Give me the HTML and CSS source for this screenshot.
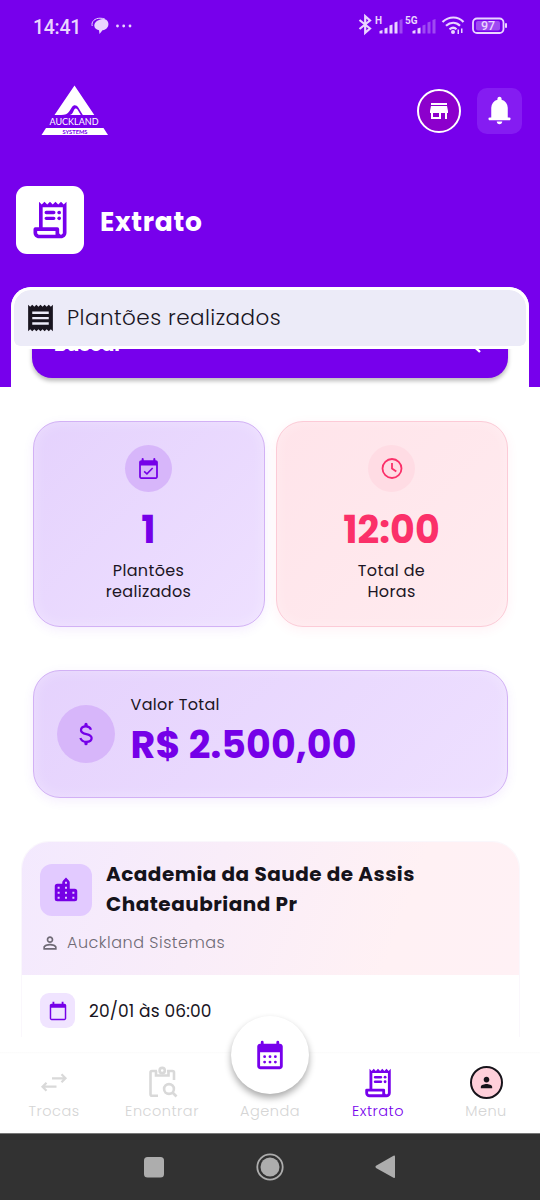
FILE: index.html
```html
<!DOCTYPE html>
<html lang="pt-BR">
<head>
<meta charset="utf-8">
<title>Extrato</title>
<link rel="stylesheet" href="styles.css">
</head>
<body>
<svg class="defs" width="0" height="0" aria-hidden="true">
  <symbol id="receipt-long" viewBox="0 0 24 24"><path d="M19.500 3.500L18 2l-1.500 1.500L15 2l-1.500 1.500L12 2l-1.500 1.500L9 2 7.500 3.500 6 2v14H4q-1 0-1 1v2c0 1.660 1.340 3 3 3h12c1.660 0 3-1.340 3-3V2l-1.500 1.500zM15 20H6c-.55 0-1-.45-1-1v-1h10v2zm4-1c0 .55-.45 1-1 1s-1-.45-1-1v-2q0-1-1-1H8V5h11v14z"/><path d="M10 7h4q1 0 1 .9t-1 .9h-4q-1 0-1-.9t1-.9zM10 10.200h4q1 0 1 .9t-1 .9h-4q-1 0-1-.9t1-.9z"/><circle cx="17" cy="7.900" r="1"/><circle cx="17" cy="11.100" r="1"/></symbol>
</svg>
<div class="screen">
  <header class="hero">
    <div class="status">
      <span class="time">14:41</span>
      <svg class="status-left" width="44" height="24" viewBox="0 0 44 24">
        <path d="M8 4c4-2 8-1 9 2 1.500 4-1 7.500-5.500 8.300L8.500 18 8 14.300C2 13 1.500 6.500 8 4z"/>
        <path class="hair" d="M1.200 10C0 5.500 4 2.200 9 2.200q3 0 5 1"/>
        <circle cx="26.500" cy="10" r="1.400"/><circle cx="32.700" cy="10" r="1.400"/><circle cx="39" cy="10" r="1.400"/>
      </svg>
      <svg class="status-right" width="152" height="24" viewBox="0 0 152 24">
        <path class="line wide" d="M1.500 8l10.500 8.500-4.800 4.300V4.200L12 8.500 1.500 17"/>
        <text class="net" x="17" y="12">H</text>
        <path d="M21.500 21.500v-2.500l3-1v3.500zM26.500 21.500v-5l3-1v6zM31.500 21.500v-8l3-1v9zM36.500 21.500v-11l3-1v12z"/>
        <path class="dim" d="M41.500 21.500V8l3-1v14.500z"/>
        <text class="net" x="47" y="12">5G</text>
        <path d="M54.500 21.500v-2.500l3-1v3.500zM59.500 21.500v-5l3-1v6z"/>
        <path class="dim" d="M64.500 21.500v-8l3-1v9zM69.500 21.500v-11l3-1v12zM74.500 21.500V8l3-1v14.500z"/>
        <path class="line wide" d="M84.500 10c6.500-6 15.500-6 21 0M88 13.800c4.500-4 10-4 14 0M91.500 17.300c2.500-2 5-2 7 0"/>
        <circle cx="95" cy="20" r="2"/><path d="M99.500 17.500h1.500v4.500h-1.500zM103 16.500h1.500V21H103z"/>
        <rect class="line" x="115" y="6.500" width="30.500" height="14.500" rx="4"/>
        <rect class="dim" x="118" y="9" width="24" height="9.500" rx="2"/>
        <rect x="147" y="11" width="2" height="5" rx="1"/>
        <text class="pct" x="123" y="18.200">97</text>
      </svg>
    </div>
    <div class="topbar">
      <svg class="logo" width="68" height="52" viewBox="0 0 68 52">
        <path d="M33.500 1.500L53.300 31H41.800l-4.500-7.500c-1.800-3-4.700-3-6.300-.6L28.500 27c-2 3-4.500 4-8.500 4h-6.500z"/>
        <path d="M34.300 24.500c.8-.3 1.700.1 2.200 1L39.800 31H29c1.500-.5 2.500-1.600 3-2.800.8-1.700 1.500-3.300 2.300-3.700z"/>
        <text class="logo-name" x="8.500" y="41" textLength="49" lengthAdjust="spacingAndGlyphs">AUCKLAND</text>
        <path d="M5 44h57.500l4.500 6.900H.5z"/>
        <text class="logo-sub" x="21.500" y="49.700" textLength="25" lengthAdjust="spacingAndGlyphs">SYSTEMS</text>
      </svg>
      <span class="store"><svg width="24" height="24" viewBox="0 0 24 24"><path d="M20 4H4v2h16V4zm1 10v-2l-1-5H4l-1 5v2h1v6h10v-6h4v6h2v-6h1zm-9 4H6v-4h6v4z"/></svg></span>
      <span class="bell"><svg width="33" height="33" viewBox="0 0 24 24"><path d="M4.500 19Q4 19 4 18v-.5q0-.5 1-.5h1v-7q0-2.075 1.250-3.687T10.500 4.200v-.7q0-.625.438-1.062T12 2t1.063.438T13.500 3.500v.7q2 .5 3.250 2.113T18 10v7h1q1 0 1 .5v.5q0 1-.5 1zM12 22q-.825 0-1.412-.587T10 20h4q0 .825-.587 1.413T12 22"/></svg></span>
    </div>
    <div class="heading">
      <span class="heading-icon"><svg width="44" height="44"><use href="#receipt-long"/></svg></span>
      <h1>Extrato</h1>
    </div>
    <section class="sheet">
      <div class="tab">
        <svg width="33" height="32" viewBox="0 0 24 24" preserveAspectRatio="none"><path d="M18 17H6v-1.800h12V17zm0-4H6v-1.800h12V13zm0-4H6V7.200h12V9zM3 22l1.500-1.500L6 22l1.500-1.500L9 22l1.500-1.500L12 22l1.500-1.500L15 22l1.500-1.500L18 22l1.500-1.500L21 22V2l-1.500 1.500L18 2l-1.500 1.500L15 2l-1.500 1.500L12 2l-1.500 1.500L9 2 7.500 3.500 6 2 4.500 3.500 3 2v20z"/></svg>
        <span>Plantões realizados</span>
      </div>
      <div class="search-window">
        <div class="search">
          <span>Buscar</span>
          <svg width="24" height="24" viewBox="0 0 24 24"><circle cx="9" cy="5" r="6"/><path d="M13 9.500l7 6.500"/></svg>
        </div>
      </div>
    </section>
  </header>
  <main class="content">
    <div class="stats">
      <article class="card stat">
        <span class="disc"><svg width="25" height="25" viewBox="0 0 24 24"><path d="M19 4h-.4V3q0-1-1-1t-1 1v1H7.400V3q0-1-1-1t-1 1v1H5c-1.100 0-2 .9-2 2v14c0 1.100.9 2 2 2h14c1.100 0 2-.9 2-2V6c0-1.100-.9-2-2-2zm.3 16.300H4.700V9h14.600v11.300z"/><path class="tick thin" d="M7.800 14.800l2.700 2.400 5.500-5.700"/></svg></span>
        <strong>1</strong>
        <p>Plantões<br>realizados</p>
      </article>
      <article class="card stat pink">
        <span class="disc"><svg width="24" height="24" viewBox="0 0 24 24"><circle class="stroke" cx="12" cy="12.500" r="9.500"/><path class="tick" d="M12 7v5.500l4.300 3"/></svg></span>
        <strong>12:00</strong>
        <p>Total de<br>Horas</p>
      </article>
    </div>
    <article class="card total">
      <span class="disc big"><svg width="30" height="30" viewBox="0 0 24 24"><path class="tick" d="M16 8.600c-.6-1.700-2-2.700-4-2.700-2.400 0-4 1.200-4 3 0 4.300 8.500 2 8.500 6.300 0 1.900-1.800 3.100-4.300 3.100-2.300 0-4-1.100-4.700-3.100"/><path d="M10.700 6V4.300Q10.700 3 12 3t1.300 1.300V6zM10.700 18v1.700q0 1.300 1.300 1.300t1.300-1.300V18z"/></svg></span>
      <div>
        <p>Valor Total</p>
        <strong>R$ 2.500,00</strong>
      </div>
    </article>
    <article class="shift">
      <div class="shift-head">
        <div class="place">
          <span class="place-icon"><svg width="30" height="30" viewBox="0 0 24 24"><path d="M15 11V6q0-1-.7-1.700L12 2 9.700 4.300Q9 5 9 6v1H5Q3 7 3 9v10q0 2 2 2h14q2 0 2-2v-6q0-2-2-2h-4zm-8.100 7.900H5.300v-1.600h1.600v1.600zm0-4H5.300v-1.600h1.600v1.600zm0-4H5.300V9.300h1.600v1.600zm5.900 8h-1.600v-1.600h1.600v1.600zm0-4h-1.600v-1.600h1.600v1.600zm0-4h-1.600V9.300h1.600v1.600zm0-4h-1.600V5.300h1.600v1.600zm5.900 12h-1.600v-1.600h1.600v1.600zm0-4h-1.600v-1.600h1.600v1.600z"/></svg></span>
          <h2>Academia da Saude de Assis<br>Chateaubriand Pr</h2>
        </div>
        <div class="person">
          <svg width="20" height="20" viewBox="0 0 24 24"><path d="M12 6a2 2 0 110 4 2 2 0 010-4m0 9c2.700 0 5.800 1.290 6 2v1H6v-.99c.2-.72 3.300-2.010 6-2.010m0-11C9.790 4 8 5.790 8 8s1.790 4 4 4 4-1.790 4-4-1.790-4-4-4zm0 9c-2.670 0-8 1.340-8 4v3h16v-3c0-2.660-5.330-4-8-4z"/></svg>
          <span>Auckland Sistemas</span>
        </div>
      </div>
      <div class="when">
        <span class="when-icon"><svg width="22" height="22" viewBox="0 0 24 24"><path d="M19 4h-1V2h-2v2H8V2H6v2H5c-1.100 0-2 .9-2 2v14c0 1.100.9 2 2 2h14c1.100 0 2-.9 2-2V6c0-1.100-.9-2-2-2zm.4 16.400H4.600V8.500h14.800v11.900z"/></svg></span>
        <span>20/01 às 06:00</span>
      </div>
    </article>
  </main>
  <nav class="tabs">
    <a><svg width="34" height="34" viewBox="0 0 34 34"><path class="ln thin" d="M15 12.300h13M24.500 8.300l4 4-4 4M19.500 20.700H6M9.500 16.700l-4 4 4 4"/></svg><span>Trocas</span></a>
    <a><svg width="34" height="34" viewBox="0 0 34 34"><path class="ln" d="M13 29.700H7Q5.500 29.700 5.500 28.200V6.500Q5.500 5 7 5H12M22 5h5.500Q29 5 29 6.500V14M11 5v4.500h12.500V5"/><circle class="ln" cx="17.200" cy="4.500" r="2.600"/><circle class="ln" cx="24" cy="23" r="4.900"/><path class="ln" d="M27.500 26.500l4 4"/></svg><span>Encontrar</span></a>
    <a><i></i><span>Agenda</span></a>
    <a class="active"><svg width="34" height="34"><use href="#receipt-long"/></svg><span>Extrato</span></a>
    <a><b class="avatar"><svg width="17" height="17" viewBox="0 0 24 24"><path d="M12 12c2.210 0 4-1.790 4-4s-1.790-4-4-4-4 1.790-4 4 1.790 4 4 4zm0 2c-2.670 0-8 1.340-8 4v2h16v-2c0-2.660-5.330-4-8-4z"/></svg></b><span>Menu</span></a>
    <button class="fab"><svg width="34" height="34" viewBox="0 0 24 24"><path d="M19 4h-.5V3q0-1-1-1t-1 1v1h-9V3q0-1-1-1t-1 1v1H5c-1.100 0-2 .9-2 2v14c0 1.100.9 2 2 2h14c1.100 0 2-.9 2-2V6c0-1.100-.9-2-2-2zm0 16H5V10h14v10z"/><circle cx="8.200" cy="13.200" r="1"/><circle cx="12" cy="13.200" r="1"/><circle cx="15.800" cy="13.200" r="1"/><circle cx="8.200" cy="17" r="1"/><circle cx="12" cy="17" r="1"/><circle cx="15.800" cy="17" r="1"/></svg></button>
  </nav>
  <footer class="system">
    <svg width="24" height="30" viewBox="0 0 24 30"><rect x="2" y="5" width="20" height="20.500" rx="3.500"/></svg>
    <svg width="30" height="30" viewBox="0 0 30 30"><circle class="ring" cx="15" cy="15" r="12.700"/><circle cx="15" cy="15" r="9.500"/></svg>
    <svg width="24" height="30" viewBox="0 0 24 30"><path d="M2 13.800L19.500 3.700q1.500-.7 1.500.8v20.500q0 1.500-1.500.8L2 16q-1.300-1.100 0-2.200z"/></svg>
  </footer>
</div>
</body>
</html>
```

FILE: styles.css
```css
* { box-sizing: border-box; }
body { margin: 0; font-family: Poppins, Inter, "Noto Sans", sans-serif; color: #19151f; }
h1, h2, p { margin: 0; }
svg { display: block; fill: currentColor; flex: none; }
.defs { position: absolute; }
.screen { width: 540px; height: 1200px; display: flex; flex-direction: column; overflow: hidden; background: #fff; }

.hero { height: 387px; flex: none; background: #7700ec; display: flex; flex-direction: column; }
.status { height: 52px; flex: none; padding: 12px 30px 0 33px; display: flex; color: #ead5ff; }
.time { font: 500 19.5px/31px Roboto, sans-serif; width: 58px; letter-spacing: -.3px; }
.status-left { margin-top: 4px; }
.status-right { margin: 0 0 0 auto; overflow: visible; }
.line { fill: none; stroke: currentColor; stroke-width: 1.8; }
.hair { fill: none; stroke: currentColor; stroke-width: 1; }
.wide { stroke-width: 2.2; }
.dim { opacity: .35; }
.net { font: 700 10px Roboto, sans-serif; }
.pct { font: 500 12.5px Roboto, sans-serif; }

.topbar { height: 84px; flex: none; padding: 33px 18px 0 41px; display: flex; align-items: center; color: #fff; }
.logo { margin: -1px auto 0 0; }
.logo-name { font: 8.8px Lato, sans-serif; }
.logo-sub { font: 700 5.6px Lato, sans-serif; fill: #7700ec; }
.store { width: 44px; height: 44px; border: 2px solid #fff; border-radius: 50%; background: #8c00cc; display: grid; place-items: center; margin-right: 16px; }
.bell { width: 45px; height: 46px; border-radius: 10px; background: #851cf2; display: grid; place-items: center; }

.heading { margin: 50px 16px 0; height: 68px; flex: none; display: flex; align-items: center; gap: 16px; color: #fff; }
.heading-icon { width: 68px; height: 68px; border-radius: 11px; background: #fff; color: #7700ec; display: grid; place-items: center; }
h1 { font-size: 26.5px; line-height: 40px; font-weight: 700; letter-spacing: .7px; padding-top: 3px; }

.sheet { margin: 33px 11px 0; height: 100px; border-radius: 20px 20px 0 0; background: #fff; overflow: hidden; }
.tab { height: 62px; border: 3px solid #fff; border-radius: 20px 20px 9px 9px; background: #ecebf8; background-clip: padding-box; display: flex; align-items: center; gap: 10px; padding: 0 0 1px 10px; font-size: 21.5px; font-weight: 300; letter-spacing: .45px; }
.search-window { height: 38px; overflow: hidden; padding: 0 21px; }
.search { height: 60px; margin-top: -31px; border-radius: 20px; background: #7700ec; box-shadow: 0 3px 4px #0004; color: #fff; display: flex; justify-content: space-between; align-items: center; padding: 0 24px 0 22px; font-size: 19px; line-height: 24px; font-weight: 700; }
.search span { padding-bottom: 7px; }
.search svg { fill: none; stroke: currentColor; stroke-width: 2.3; }

.content { flex: none; height: 650px; overflow: hidden; padding: 33.500px 20px 0 21px; }
.stats { display: grid; grid-template-columns: 1fr 1fr; gap: 11px; margin: 0 12.500px 0 11.500px; }
.card { border: 1px solid #d2b1f5; border-radius: 27px; background: linear-gradient(135deg, #e5d2fd, #eee0ff); color: #7500e8; box-shadow: 0 3px 12px #7700ec12, inset 0 0 14px #ffffff4d; }
.card p { color: #1c1524; font-size: 16px; line-height: 21px; letter-spacing: .35px; }
.stat { height: 206px; padding-top: 23px; display: flex; flex-direction: column; align-items: center; text-align: center; }
.stat strong { font-size: 38px; line-height: 46px; margin: 15px 0 7px; font-weight: 700; }
.pink { border-color: #fccbd7; background: linear-gradient(135deg, #ffe4ea, #ffebef); color: #fb3069; box-shadow: 0 3px 12px #ff306910, inset 0 0 14px #ffffff4d; }
.disc { width: 47px; height: 47px; border-radius: 50%; background: #d7b6fa; display: grid; place-items: center; }
.pink .disc { background: #ffdce4; }
.tick, .stroke { fill: none; stroke: currentColor; stroke-width: 1.8; }
.tick.thin { stroke-width: 1.5; }
.total { margin: 43px 12.500px 0 11.500px; height: 128px; display: flex; align-items: center; gap: 16px; padding-left: 23px; }
.total .disc { width: 58px; height: 58px; }
.total > div { padding-bottom: 5px; }
.total strong { display: block; font-size: 38px; line-height: 48px; margin-top: 6px; font-weight: 700; letter-spacing: .1px; }

.shift { margin-top: 43.500px; height: 230px; border: 1px solid #faf7fc; border-radius: 28px 28px 0 0; overflow: hidden; }
.shift-head { height: 133px; padding: 18px 18px 0; background: linear-gradient(110deg, #f3e9fe, #fff1f4 75%, #fff1f5); }
.place { display: flex; align-items: center; gap: 14px; }
.place-icon { width: 52px; height: 52px; border-radius: 12px; background: #e2caff; color: #7600e5; display: grid; place-items: center; }
h2 { font-size: 20px; line-height: 29.500px; font-weight: 700; white-space: nowrap; color: #15131a; letter-spacing: .48px; }
.person { display: flex; align-items: center; gap: 7px; margin-top: 12px; color: #6f6a75; font-size: 16px; font-weight: 300; line-height: 24px; letter-spacing: .5px; }
.when { display: flex; align-items: center; gap: 14px; padding: 18px 18px 0; font-size: 17px; letter-spacing: .15px; }
.when-icon { width: 35px; height: 35px; border-radius: 9px; background: #f0e4ff; color: #7500e8; display: grid; place-items: center; }

.tabs { position: relative; flex: none; height: 96px; padding-top: 15px; display: grid; grid-template-columns: repeat(5, 108px); background: linear-gradient(#fff 15px, #fafafa 15px, #fff 17px); color: #d9d9d9; }
.tabs a { display: flex; flex-direction: column; align-items: center; padding-top: 14px; font-size: 14.500px; font-weight: 300; letter-spacing: .5px; line-height: 20px; }
.tabs a > :first-child { height: 34px; }
.tabs span { color: #d5d5d5; padding-top: 1px; }
.ln { fill: none; stroke: currentColor; stroke-width: 2.6; }
.ln.thin { stroke-width: 2.2; }
.tabs .active, .tabs .active span { color: #7700ec; }
.tabs a > .avatar { height: 33px; width: 33px; margin-bottom: 1px; border: 2px solid #17131a; border-radius: 50%; background: #ffcfda; color: #17131a; display: grid; place-items: center; }
.fab { position: absolute; left: 231px; top: -21px; width: 78px; height: 78px; padding: 0; border: 0; border-radius: 50%; background: #fff; color: #7700ec; display: grid; place-items: center; box-shadow: 0 4px 7px #0005; }

.system { flex: 1; background: #323232; color: #adadad; border-top: 1px solid #777; display: grid; grid-template-columns: 24px 30px 24px; column-gap: 89px; justify-content: center; align-items: center; }
.ring { fill: none; stroke: currentColor; stroke-width: 1.8; }
```
